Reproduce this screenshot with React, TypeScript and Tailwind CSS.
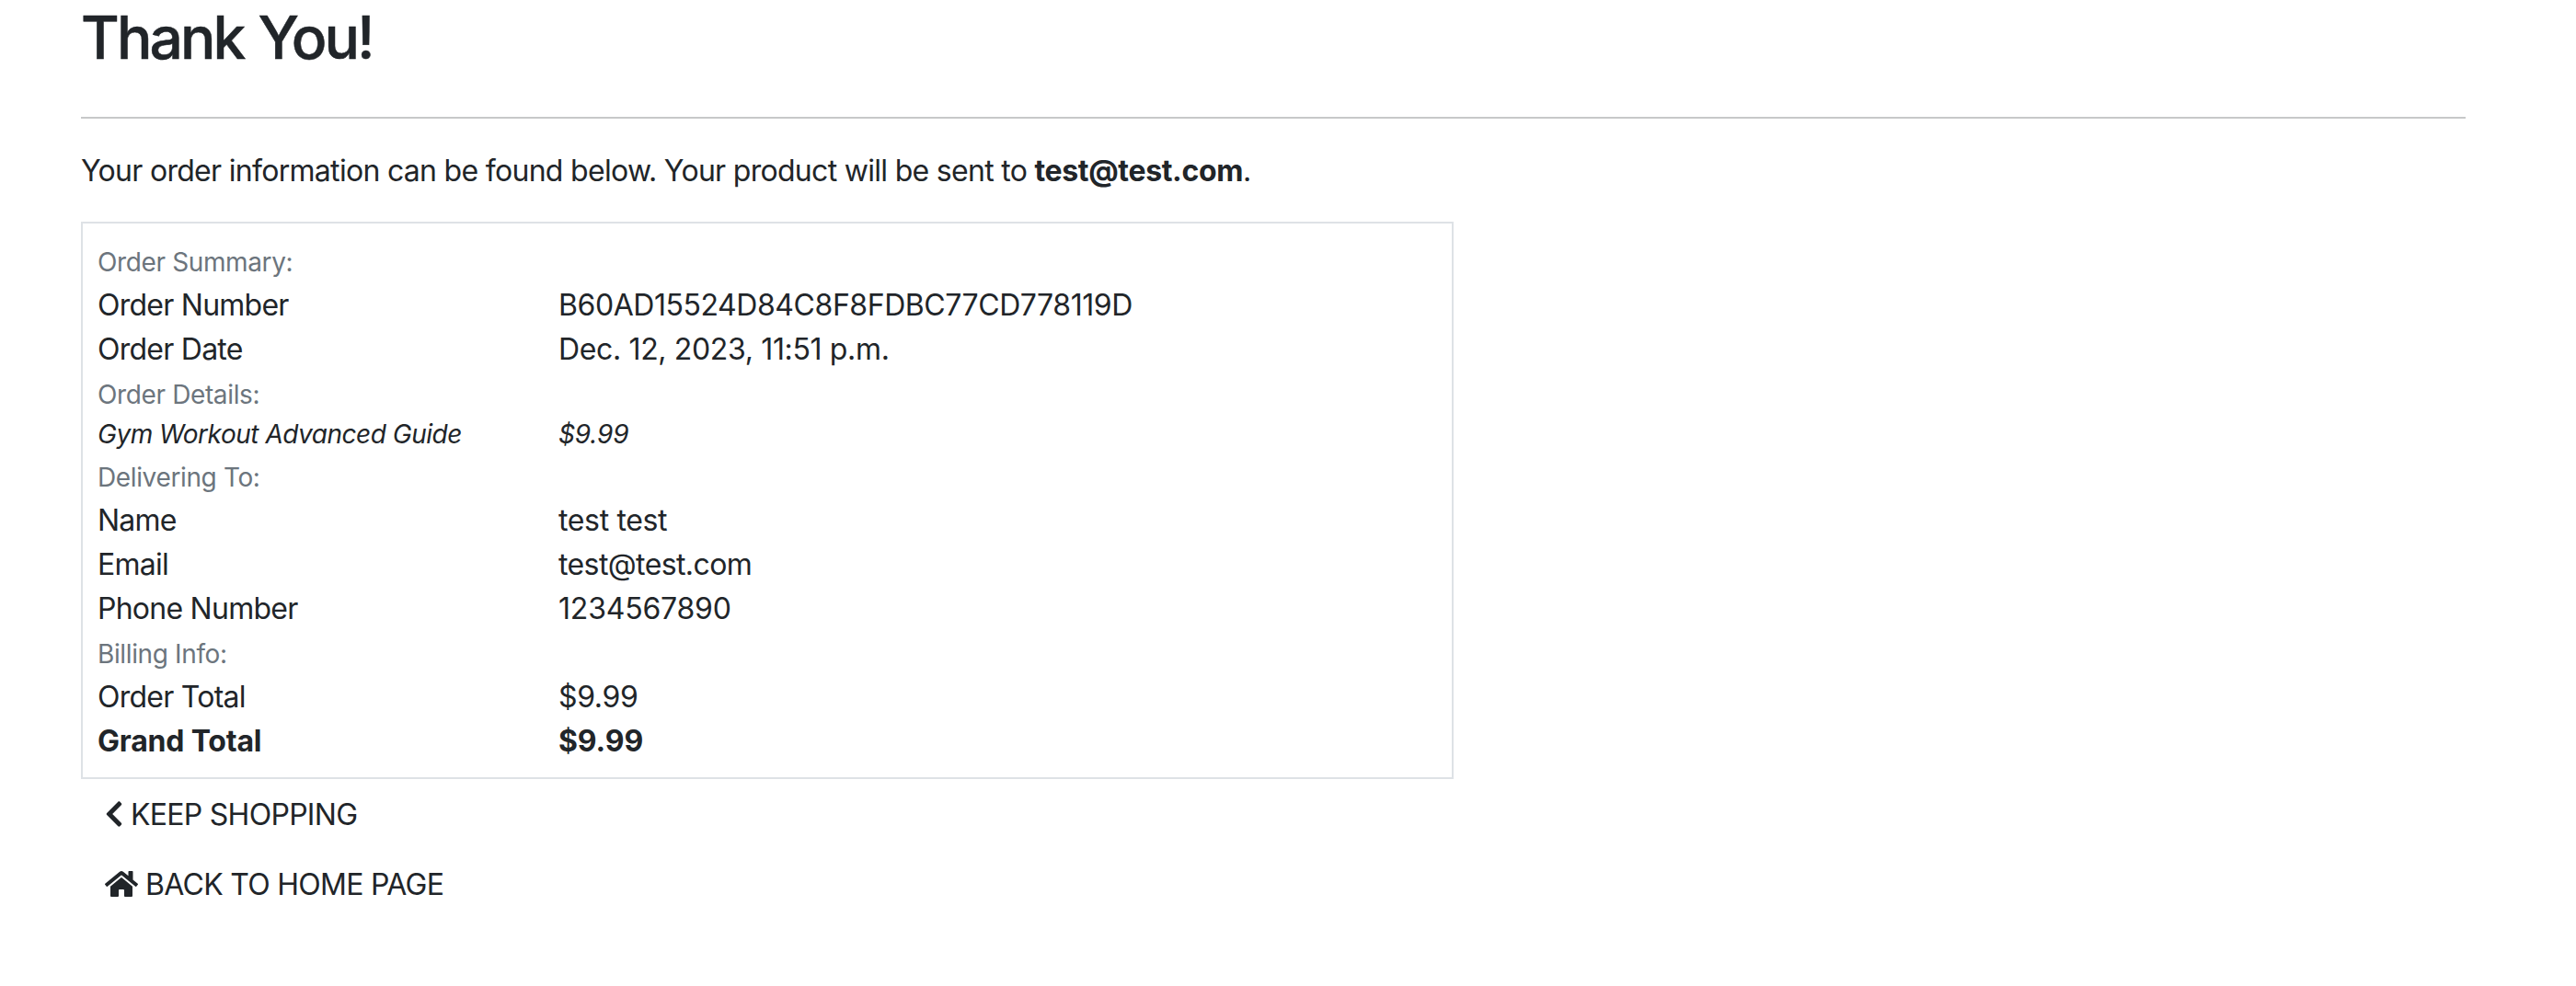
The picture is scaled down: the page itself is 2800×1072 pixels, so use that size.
import React from "react";
import { FaChevronLeft, FaHome } from "react-icons/fa";

type RowProps = { label: string; value: string; kind?: "item" | "total"; valueClass?: string };

function Heading({ children }: { children: string }) {
  return <div className="h-12 text-[28px] leading-[50px] tracking-[-0.37px] text-[#6c757d]">{children}</div>;
}

function Row({ label, value, kind, valueClass = "tracking-[-0.35px]" }: RowProps) {
  const look =
    kind === "item"
      ? "h-[42px] text-[28px] leading-10 tracking-[-0.48px] italic"
      : kind === "total"
        ? "h-12 text-[32px] leading-12 tracking-[-0.2px] font-bold"
        : "h-12 text-[32px] leading-12 tracking-[-0.75px]";
  return (
    <div className={`grid grid-cols-[501px_1fr] ${look}`}>
      <span>{label}</span>
      <span className={valueClass}>{value}</span>
    </div>
  );
}

export default function App() {
  return (
    <main className="h-[1072px] overflow-hidden bg-white pr-[120px] pl-[88px] font-['Inter',sans-serif] text-[#212529]">
      <h1 className="h-[127px] pt-[2px] text-[64px] leading-[77px] font-medium tracking-[-2.9px] [-webkit-text-stroke:0.5px_#212529] [word-spacing:2px]">
        Thank You!
      </h1>
      <hr className="h-0.5 border-0 bg-[#c7c8c9]" />
      <p className="mt-[33px] text-[32px] leading-12 tracking-[-0.7px]">
        Your order information can be found below. Your product will be sent to{" "}
        <strong className="tracking-[-0.35px]">test@test.com</strong>.
      </p>
      <section className="mt-[31px] h-[606px] w-[1492px] border-2 border-[#dee2e6] px-4 pt-[17px]">
        <Heading>Order Summary:</Heading>
        <Row label="Order Number" value="B60AD15524D84C8F8FDBC77CD778119D" valueClass="tracking-[-0.44px]" />
        <Row label="Order Date" value="Dec. 12, 2023, 11:51 p.m." />
        <Heading>Order Details:</Heading>
        <Row label="Gym Workout Advanced Guide" value="$9.99" kind="item" valueClass="tracking-[-0.1px]" />
        <Heading>Delivering To:</Heading>
        <Row label="Name" value="test test" />
        <Row label="Email" value="test@test.com" valueClass="tracking-[-0.6px]" />
        <Row label="Phone Number" value="1234567890" valueClass="tracking-[-0.2px]" />
        <Heading>Billing Info:</Heading>
        <Row label="Order Total" value="$9.99" />
        <Row label="Grand Total" value="$9.99" kind="total" valueClass="tracking-[-0.1px]" />
      </section>
      <nav className="flex flex-col items-start gap-7 pt-[15px] pl-[26px] text-[32px] leading-12 tracking-[-0.72px]">
        <a className="flex items-center gap-2"><FaChevronLeft className="mb-0.5 h-8 w-5" />KEEP SHOPPING</a>
        <a className="flex items-center gap-2"><FaHome className="mb-0.5 h-8 w-9" />BACK TO HOME PAGE</a>
      </nav>
    </main>
  );
}
